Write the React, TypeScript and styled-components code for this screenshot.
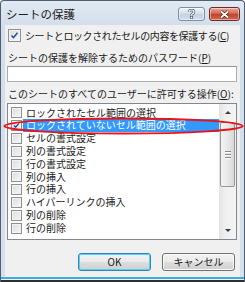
import React from 'react'
import styled, { createGlobalStyle } from 'styled-components'

const GlobalStyle = createGlobalStyle`
    html, body {
        margin: 0;
        padding: 0;
        background: #ffffff;
    }
    body {
        font-family: "Noto Sans CJK JP", "Liberation Sans", sans-serif;
        color: #1a1a1a;
    }
`

const Window = styled.div`
    position: relative;
    display: flex;
    flex-direction: column;
    width: 245px;
    height: 282px;
    box-sizing: border-box;
    border: 1px solid #4f5e70;
    border-bottom: none;
    border-radius: 4px 4px 0 0;
    padding: 0 4px;
    background: linear-gradient(#e2eaf3, #d2deeb 24px, #d6e1ed);
    overflow: hidden;
`

const TitleBar = styled.div`
    display: flex;
    align-items: flex-start;
    justify-content: space-between;
    height: 24px;
    flex-shrink: 0;
`

const Title = styled.div`
    padding: 6px 0 0 1px;
    font-size: 11.5px;
    line-height: 14px;
    color: #1c1c1c;
`

const CaptionButtons = styled.div`
    display: flex;
    gap: 4px;
    padding-top: 6px;
`

const CaptionButton = styled.div<{ close?: boolean }>`
    display: flex;
    align-items: center;
    justify-content: center;
    width: ${(props) => props.close ? '31px' : '27px'};
    height: 14px;
    box-sizing: border-box;
    border: 1px solid ${(props) => props.close ? '#6d2b22' : '#7d8ea3'};
    border-radius: 3px;
    background: ${(props) => props.close
        ? 'linear-gradient(#e9a99b, #d26a55 45%, #c2412c 50%, #cf6a4e)'
        : 'linear-gradient(#eef3f8, #d6e0eb 45%, #c3d1e0 50%, #d3dfeb)'};
    box-shadow: inset 0 0 0 1px rgba(255, 255, 255, 0.45);
`

const Body = styled.div`
    display: flex;
    flex-direction: column;
    flex: 1;
    padding: 0 3px 0 2px;
    background: #f0f0f0;
    font-size: 10px;
`

const CheckRow = styled.div`
    display: flex;
    align-items: center;
    gap: 4px;
    height: 13px;
    margin-top: 4px;
    padding-left: 1px;
    line-height: 13px;
    letter-spacing: -0.4px;
    white-space: nowrap;
`

const Label = styled.div<{ top: number }>`
    margin-top: ${(props) => props.top}px;
    padding-left: 1px;
    line-height: 12px;
    white-space: nowrap;
`

const PasswordInput = styled.div`
    height: 16px;
    margin-top: 2px;
    box-sizing: border-box;
    border: 1px solid #abadb3;
    border-top-color: #8e9299;
    background: #ffffff;
`

const ListBox = styled.div`
    display: flex;
    height: 137px;
    margin-top: 3px;
    box-sizing: border-box;
    border: 1px solid #828790;
    background: #ffffff;
`

const Items = styled.div`
    flex: 1;
    padding-top: 2.6px;
`

const Item = styled.div<{ selected?: boolean }>`
    display: flex;
    align-items: center;
    height: 12.8px;
    padding-left: 3px;
    white-space: nowrap;

    span {
        flex: 1;
        margin-left: 1px;
        padding-left: 3px;
        line-height: 12.8px;
        background: ${(props) => props.selected ? '#3399ff' : 'transparent'};
        color: ${(props) => props.selected ? '#ffffff' : '#1a1a1a'};
    }
`

const Box = styled.div<{ size: number }>`
    position: relative;
    width: ${(props) => props.size}px;
    height: ${(props) => props.size}px;
    flex-shrink: 0;
    box-sizing: border-box;
    border: 1px solid #8e8f8f;
    background: linear-gradient(135deg, #dcdcdc, #f6f6f6);
    box-shadow: inset 0 0 0 1px #f4f4f4;

    svg {
        position: absolute;
        left: 0;
        top: 0;
    }
`

const ScrollBar = styled.div`
    display: flex;
    flex-direction: column;
    width: 17px;
    background: linear-gradient(90deg, #e3e3e3, #f0f0f0 40%, #f4f4f4);
`

const ArrowButton = styled.div`
    display: flex;
    align-items: center;
    justify-content: center;
    height: 17px;
    flex-shrink: 0;
`

const Arrow = styled.div<{ down?: boolean }>`
    width: 0;
    height: 0;
    border-left: 3px solid transparent;
    border-right: 3px solid transparent;
    ${(props) => props.down ? 'border-top: 3px solid #3c3c3c;' : 'border-bottom: 3px solid #3c3c3c;'}
`

const Track = styled.div`
    flex: 1;
    padding-top: 1px;
`

const Thumb = styled.div`
    display: flex;
    flex-direction: column;
    align-items: center;
    justify-content: center;
    gap: 2px;
    height: 65px;
    margin: 0 1px;
    box-sizing: border-box;
    border: 1px solid #979797;
    border-radius: 2px;
    background: linear-gradient(90deg, #f4f4f4, #e8e8e8 50%, #d8d8d8);

    i {
        display: block;
        width: 6px;
        height: 1px;
        background: #8a8a8a;
        box-shadow: 0 1px 0 #fbfbfb;
    }
`

const ButtonRow = styled.div`
    display: flex;
    justify-content: flex-end;
    gap: 11px;
    margin-top: 13px;
    padding-right: 2px;
`

const Button = styled.div<{ primary?: boolean }>`
    display: flex;
    align-items: center;
    justify-content: center;
    width: 73px;
    height: 18px;
    box-sizing: border-box;
    border: 1px solid ${(props) => props.primary ? '#3c7fb1' : '#707070'};
    border-radius: 3px;
    background: linear-gradient(#f2f2f2, #ebebeb 48%, #dddddd 52%, #cfcfcf);
    box-shadow: inset 0 0 0 1px ${(props) => props.primary ? '#48d8fb' : '#fcfcfc'};
    font-size: 10px;
    line-height: 1;
`

const BottomEdge = styled.div`
    height: 5px;
    margin: 0 -5px;
    flex-shrink: 0;
    background: linear-gradient(#3ab0d8 0 2px, #eef2f6 2px 3px, #2f2f2f 3px);
`

const Highlight = styled.svg`
    position: absolute;
    left: 2px;
    top: 116px;
    pointer-events: none;
`

const items = [
    'ロックされたセル範囲の選択',
    'ロックされていないセル範囲の選択',
    'セルの書式設定',
    '列の書式設定',
    '行の書式設定',
    '列の挿入',
    '行の挿入',
    'ハイパーリンクの挿入',
    '列の削除',
    '行の削除'
]

const Check = ({ size }: { size: number }) => (
    <svg width={size} height={size} viewBox="0 0 13 13">
        <path d="M3 6.5 L5.3 9 L10 3.3" fill="none" stroke="#21479a" strokeWidth="1.7" />
    </svg>
)

const CheckBox = ({ size, checked }: { size: number; checked?: boolean }) => (
    <Box size={size}>{checked && <Check size={size - 2} />}</Box>
)

const App = () => {
    return (
        <>
            <GlobalStyle />
            <Window>
                <TitleBar>
                    <Title>シートの保護</Title>
                    <CaptionButtons>
                        <CaptionButton>
                            <svg width="9" height="10" viewBox="0 0 9 10">
                                <path d="M2 3 Q2 1 4.5 1 Q7 1 7 3 Q7 4.3 5.3 5 Q4.5 5.4 4.5 6.6" fill="none" stroke="#4b5d73" strokeWidth="2.6" />
                                <path d="M2 3 Q2 1 4.5 1 Q7 1 7 3 Q7 4.3 5.3 5 Q4.5 5.4 4.5 6.6" fill="none" stroke="#ffffff" strokeWidth="1.2" />
                                <rect x="3.3" y="7.6" width="2.4" height="2.2" fill="#ffffff" stroke="#4b5d73" strokeWidth="0.7" />
                            </svg>
                        </CaptionButton>
                        <CaptionButton close>
                            <svg width="11" height="9" viewBox="0 0 11 9">
                                <path d="M2 1.5 L9 7.5 M9 1.5 L2 7.5" stroke="#5a1e16" strokeWidth="3.2" />
                                <path d="M2 1.5 L9 7.5 M9 1.5 L2 7.5" stroke="#ffffff" strokeWidth="1.8" />
                            </svg>
                        </CaptionButton>
                    </CaptionButtons>
                </TitleBar>
                <Body>
                    <CheckRow>
                        <CheckBox size={13} checked />
                        <span>シートとロックされたセルの内容を保護する(<u>C</u>)</span>
                    </CheckRow>
                    <Label top={10}>シートの保護を解除するためのパスワード(<u>P</u>)</Label>
                    <PasswordInput />
                    <Label top={6}>このシートのすべてのユーザーに許可する操作(<u>O</u>):</Label>
                    <ListBox>
                        <Items>
                            {items.map((text, i) => (
                                <Item key={text} selected={i === 1}>
                                    <CheckBox size={11} checked={i === 1} />
                                    <span>{text}</span>
                                </Item>
                            ))}
                        </Items>
                        <ScrollBar>
                            <ArrowButton><Arrow /></ArrowButton>
                            <Track>
                                <Thumb><i /><i /><i /></Thumb>
                            </Track>
                            <ArrowButton><Arrow down /></ArrowButton>
                        </ScrollBar>
                    </ListBox>
                    <ButtonRow>
                        <Button primary>OK</Button>
                        <Button>キャンセル</Button>
                    </ButtonRow>
                </Body>
                <BottomEdge />
                <Highlight width="241" height="18" viewBox="0 0 241 18">
                    <ellipse cx="120.5" cy="9" rx="119.2" ry="7.6" fill="none" stroke="#e8141c" strokeWidth="2" />
                </Highlight>
            </Window>
        </>
    )
}

export default App
